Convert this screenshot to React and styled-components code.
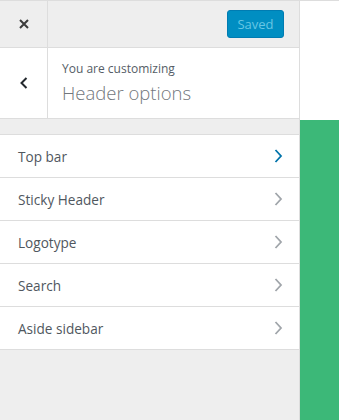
import React from 'react';
import styled, { createGlobalStyle } from 'styled-components';

const GlobalStyle = createGlobalStyle`
  html, body {
    margin: 0;
    padding: 0;
    height: 100%;
  }
  body {
    font-family: "Open Sans", "Liberation Sans", sans-serif;
    background: #fff;
  }
  #root {
    height: 100%;
  }
`;

const Page = styled.div`
  display: flex;
  height: 420px;
  border-top: 1px solid #ddd;
  box-sizing: border-box;
`;

const Sidebar = styled.div`
  width: 300px;
  flex-shrink: 0;
  background: #eee;
  border-right: 1px solid #ddd;
  box-sizing: border-box;
  display: flex;
  flex-direction: column;
`;

const Preview = styled.div`
  flex: 1;
  display: flex;
  flex-direction: column;
`;

const PreviewTop = styled.div`
  height: 119px;
  background: #fff;
`;

const PreviewBody = styled.div`
  flex: 1;
  background: #3cb878;
`;

const TopBar = styled.div`
  display: flex;
  height: 46px;
  border-bottom: 1px solid #ddd;
  background: #eee;
`;

const IconCell = styled.button`
  width: 48px;
  border: 0;
  border-right: 1px solid #ddd;
  background: transparent;
  padding: 0;
  display: flex;
  align-items: center;
  justify-content: center;
  color: #23282d;
`;

const Actions = styled.div`
  flex: 1;
  display: flex;
  align-items: center;
  justify-content: flex-end;
  padding-right: 15px;
`;

const SaveButton = styled.button`
  height: 28px;
  width: 57px;
  border: 1px solid #007cb2;
  border-radius: 3px;
  background: #008ec2;
  color: #66c6e4;
  font-family: inherit;
  font-size: 13px;
  padding: 0;
`;

const TitleRow = styled.div`
  display: flex;
  height: 70px;
  background: #fff;
  border-bottom: 1px solid #ddd;
`;

const TitleText = styled.div`
  padding: 12px 14px 0;
  color: #555d66;
`;

const Eyebrow = styled.div`
  font-size: 12px;
  line-height: 18px;
`;

const Heading = styled.div`
  font-size: 18.5px;
  font-weight: 300;
  line-height: 30px;
  color: #72777c;
`;

const Spacer = styled.div`
  height: 15px;
`;

const List = styled.ul`
  list-style: none;
  margin: 0;
  padding: 0;
  background: #fff;
  border-top: 1px solid #ddd;
`;

const Item = styled.li`
  height: 42px;
  border-bottom: 1px solid #ddd;
  display: flex;
  align-items: center;
  justify-content: space-between;
  padding: 0 16px 0 18px;
  font-size: 13.6px;
  font-weight: 400;
  color: #50575e;
`;

const Chevron = ({ active }) => (
  <svg width="10" height="16" viewBox="0 0 10 16">
    <path
      d="M2.5 2 L8 8 L2.5 14"
      fill="none"
      stroke={active ? '#0073aa' : '#a0a5aa'}
      strokeWidth="1.8"
    />
  </svg>
);

const items = ['Top bar', 'Sticky Header', 'Logotype', 'Search', 'Aside sidebar'];

export default function App() {
  return (
    <>
      <GlobalStyle />
      <Page>
        <Sidebar>
          <TopBar>
            <IconCell aria-label="Close">
              <svg width="12" height="12" viewBox="0 0 12 12">
                <path d="M2 2 L10 10 M10 2 L2 10" stroke="#3c3c3c" strokeWidth="2" />
              </svg>
            </IconCell>
            <Actions>
              <SaveButton disabled>Saved</SaveButton>
            </Actions>
          </TopBar>
          <TitleRow>
            <IconCell aria-label="Back">
              <svg width="10" height="14" viewBox="0 0 10 14">
                <path d="M7.5 2 L2.5 7 L7.5 12" fill="none" stroke="#23282d" strokeWidth="2" />
              </svg>
            </IconCell>
            <TitleText>
              <Eyebrow>You are customizing</Eyebrow>
              <Heading>Header options</Heading>
            </TitleText>
          </TitleRow>
          <Spacer />
          <List>
            {items.map((label, i) => (
              <Item key={label}>
                {label}
                <Chevron active={i === 0} />
              </Item>
            ))}
          </List>
        </Sidebar>
        <Preview>
          <PreviewTop />
          <PreviewBody />
        </Preview>
      </Page>
    </>
  );
}
